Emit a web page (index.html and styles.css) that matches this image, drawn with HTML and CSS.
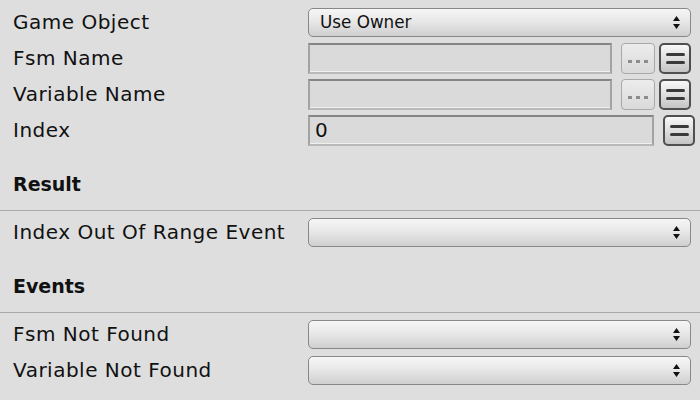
FILE: index.html
```html
<!DOCTYPE html>
<html>
<head>
<meta charset="utf-8">
<link rel="stylesheet" href="styles.css">
</head>
<body>
<div class="panel">
  <div class="group first">
    <div class="row">
      <div class="label">Game Object</div>
      <div class="control">
        <div class="popup"><span class="popup-text">Use Owner</span><span class="arrows"><svg width="7" height="13" viewBox="0 0 7 13"><path d="M3.5 0 L7 5 L0 5 Z M0 8 L7 8 L3.5 13 Z" fill="#111"/></svg></span></div>
      </div>
    </div>
    <div class="row">
      <div class="label">Fsm Name</div>
      <div class="control">
        <div class="field"></div>
        <div class="btn-dots"><span></span><span></span><span></span></div>
        <div class="btn-eq"><span></span><span></span></div>
      </div>
    </div>
    <div class="row">
      <div class="label">Variable Name</div>
      <div class="control">
        <div class="field"></div>
        <div class="btn-dots"><span></span><span></span><span></span></div>
        <div class="btn-eq"><span></span><span></span></div>
      </div>
    </div>
    <div class="row">
      <div class="label">Index</div>
      <div class="control">
        <div class="field field-wide">0</div>
        <div class="btn-eq"><span></span><span></span></div>
      </div>
    </div>
  </div>
  <div class="heading">Result</div>
  <div class="group">
    <div class="row">
      <div class="label">Index Out Of Range Event</div>
      <div class="control">
        <div class="popup"><span class="popup-text"></span><span class="arrows"><svg width="7" height="13" viewBox="0 0 7 13"><path d="M3.5 0 L7 5 L0 5 Z M0 8 L7 8 L3.5 13 Z" fill="#111"/></svg></span></div>
      </div>
    </div>
  </div>
  <div class="heading">Events</div>
  <div class="group last">
    <div class="row">
      <div class="label">Fsm Not Found</div>
      <div class="control">
        <div class="popup"><span class="popup-text"></span><span class="arrows"><svg width="7" height="13" viewBox="0 0 7 13"><path d="M3.5 0 L7 5 L0 5 Z M0 8 L7 8 L3.5 13 Z" fill="#111"/></svg></span></div>
      </div>
    </div>
    <div class="row">
      <div class="label">Variable Not Found</div>
      <div class="control">
        <div class="popup"><span class="popup-text"></span><span class="arrows"><svg width="7" height="13" viewBox="0 0 7 13"><path d="M3.5 0 L7 5 L0 5 Z M0 8 L7 8 L3.5 13 Z" fill="#111"/></svg></span></div>
      </div>
    </div>
  </div>
</div>
</body>
</html>
```

FILE: styles.css
```css
html, body {
  margin: 0;
  padding: 0;
  background: #dedede;
}
body {
  width: 700px;
  height: 400px;
  overflow: hidden;
  font-family: "DejaVu Sans", "Liberation Sans", sans-serif;
  color: #111;
}
.panel {
  display: flex;
  flex-direction: column;
}
.group {
  display: flex;
  flex-direction: column;
  padding: 3px 9px 0 13px;
  border-top: 1px solid #a9a9a9;
}
.group.first {
  padding-top: 4px;
  border-top: none;
}
.group.last {
  height: 84px;
  border-bottom: 3px solid #bdbdbd;
}
.row {
  height: 36px;
  display: flex;
  align-items: center;
}
.label {
  width: 295px;
  flex: none;
  font-size: 20px;
  letter-spacing: 0.5px;
  line-height: 24px;
}
.control {
  flex: 1;
  display: flex;
  align-items: center;
}
.heading {
  height: 62px;
  box-sizing: border-box;
  padding: 25px 0 0 13px;
  font-size: 19px;
  font-weight: bold;
  line-height: 22px;
}
.popup {
  flex: 1;
  height: 29px;
  box-sizing: border-box;
  border: 1.5px solid #888;
  border-radius: 5px;
  background: linear-gradient(#f6f6f6, #e8e8e8 45%, #cfcfcf);
  display: flex;
  align-items: center;
  padding: 0 10px 0 11px;
}
.popup-text {
  flex: 1;
  font-size: 16.8px;
}
.arrows {
  display: flex;
  align-items: center;
}
.arrows svg {
  display: block;
}
.field {
  width: 304px;
  height: 31px;
  box-sizing: border-box;
  border: 2px solid #a3a3a3;
  border-top-color: #858585;
  border-bottom-color: #b9b9b9;
  background: #dadada;
  box-shadow: inset 0 -1px 0 #f0f0f0;
  font-size: 20px;
  line-height: 27px;
  padding-left: 5px;
}
.field-wide {
  width: 346px;
  margin-right: 5px;
}
.btn-dots {
  margin-left: 9px;
  width: 34px;
  height: 31px;
  box-sizing: border-box;
  border: 1.5px solid #a9a9a9;
  border-radius: 4px;
  background: linear-gradient(#ececec, #dadada);
  display: flex;
  align-items: center;
  justify-content: center;
  gap: 4px;
  padding-top: 6px;
}
.btn-dots span {
  width: 4px;
  height: 3px;
  background: #8c8c8c;
}
.btn-eq {
  margin-left: 4px;
  width: 32px;
  height: 31px;
  box-sizing: border-box;
  border: 2px solid #4f4f4f;
  border-radius: 5px;
  background: linear-gradient(#f8f8f8, #dadada 60%, #c4c4c4);
  display: flex;
  flex-direction: column;
  align-items: center;
  justify-content: center;
  gap: 5px;
  padding-top: 1px;
}
.btn-eq span {
  width: 19px;
  height: 3px;
  border-radius: 1.5px;
  background: #3a3a3a;
}
```
